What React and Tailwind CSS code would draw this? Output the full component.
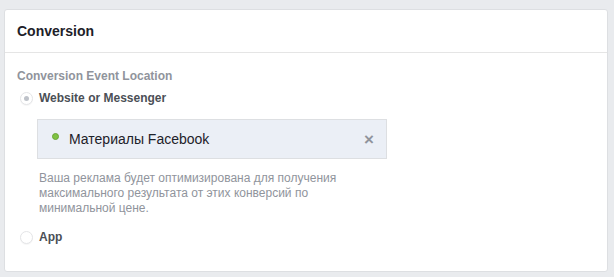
import React from "react";

export default function App() {
  return (
    <div className="w-[614px] h-[277px] bg-[#e9ebee] pt-[9px] pl-[4px] font-['Liberation_Sans',Arial,sans-serif]">
      <div className="w-[604px] h-[263px] bg-white border border-[#dddfe2] rounded-[3px]">
        <div className="h-[43px] px-3 flex items-center border-b border-[#e5e5e5]">
          <h2 className="text-[14px] font-bold text-[#1d2129]">Conversion</h2>
        </div>
        <div className="px-3 pt-[15px]">
          <p className="text-[12px] font-bold text-[#90949c] leading-[16px]">Conversion Event Location</p>
          <div className="mt-[6px] flex items-center h-[16px]">
            <span className="w-[13px] h-[13px] ml-[3px] rounded-full border border-[#e4e5e7] bg-white shadow-[0_1px_1px_rgba(0,0,0,0.04)] flex items-center justify-center">
              <span className="w-[5px] h-[5px] rounded-full bg-[#bec2c9]" />
            </span>
            <span className="ml-[6px] text-[12px] font-bold text-[#4b4f56]">Website or Messenger</span>
          </div>
          <div className="ml-[20px] mt-[13px] w-[350px] h-[40px] bg-[#ebeff6] border border-[#dddfe2] flex items-center pl-[14px] pr-[12px]">
            <span className="w-[7px] h-[7px] rounded-full bg-[#7fc243] border border-[#6aa536] -mt-[5px]" />
            <span className="ml-[10px] text-[14px] text-[#1d2129] flex-1">Материалы Facebook</span>
            <span className="text-[#90949c] text-[17px] font-bold leading-none">×</span>
          </div>
          <p className="ml-[22px] mt-[12px] w-[340px] text-[12px] leading-[15px] text-[#90949c]">
            Ваша реклама будет оптимизирована для получения максимального результата от этих конверсий по минимальной цене.
          </p>
          <div className="mt-[13px] flex items-center h-[16px]">
            <span className="w-[13px] h-[13px] ml-[3px] rounded-full border border-[#e4e5e7] bg-white shadow-[0_1px_1px_rgba(0,0,0,0.04)]" />
            <span className="ml-[6px] text-[12px] font-bold text-[#4b4f56]">App</span>
          </div>
        </div>
      </div>
    </div>
  );
}
